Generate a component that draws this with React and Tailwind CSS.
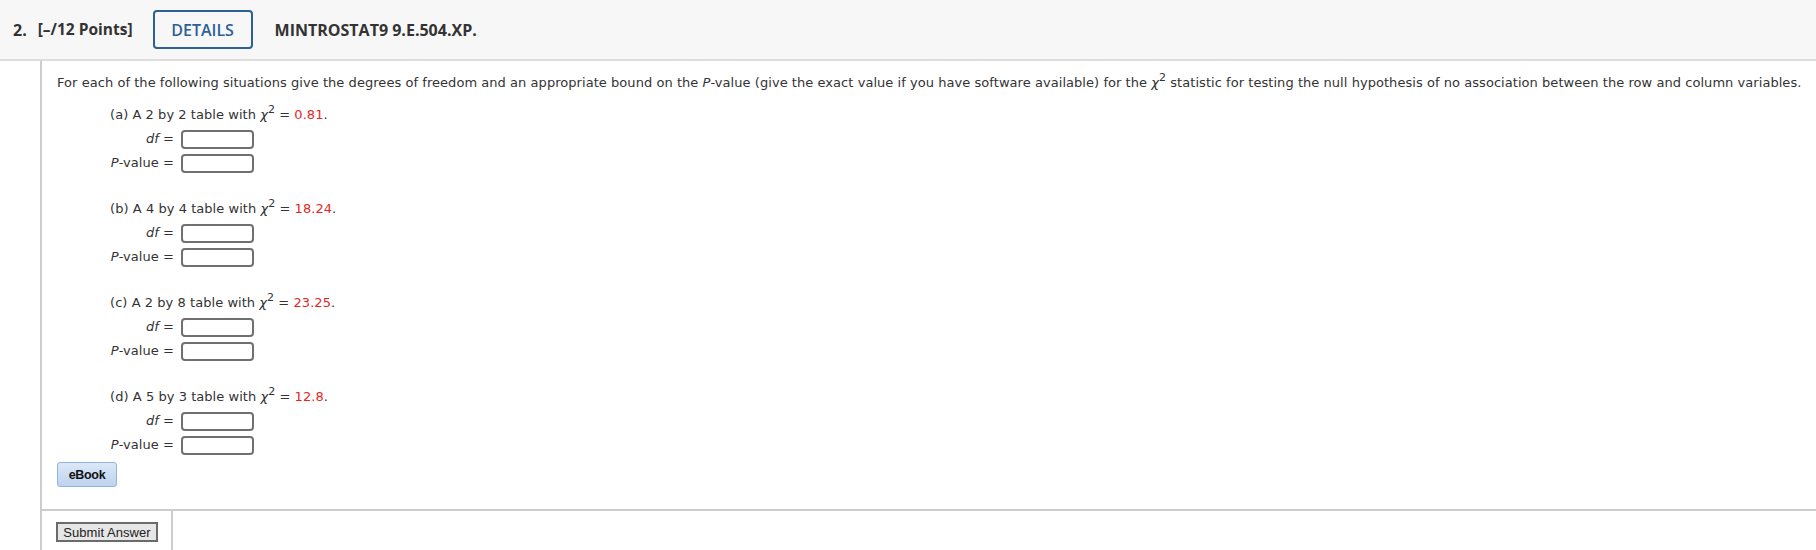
import React from "react";

const parts = [
  { key: "a", rows: 2, cols: 2, chi: "0.81" },
  { key: "b", rows: 4, cols: 4, chi: "18.24" },
  { key: "c", rows: 2, cols: 8, chi: "23.25" },
  { key: "d", rows: 5, cols: 3, chi: "12.8" },
];

// chi-squared symbol with superscript 2
const Chi = () => (
  <span className="whitespace-nowrap">
    <i>χ</i>
    <sup className="text-[11px] -top-[0.55em]">2</sup>
  </span>
);

const AnswerRow = ({ label }) => (
  <div className="flex items-center h-[24px]">
    <div className="w-[64px] text-right">{label} =</div>
    <div className="ml-[7px] w-[73px] h-[19px] border-2 border-[#707070] rounded-[4px] bg-white"></div>
  </div>
);

export default function App() {
  return (
    <div className="w-full min-h-[550px] bg-white text-[#333333]">
      {/* question header */}
      <div className="h-[61px] bg-[#f7f7f7] border-b-2 border-[#dddddd] flex items-center font-['Open_Sans',sans-serif] font-semibold text-[#333333]">
        <span className="ml-[13px] text-[16px] font-bold">2.</span>
        <span className="ml-[11px] text-[15.5px] font-bold">[–/12 Points]</span>
        <div className="ml-[20px] w-[100px] h-[39px] border-2 border-[#2c6196] rounded-[4px] flex items-center justify-center text-[#2c6196] text-[16px]">
          DETAILS
        </div>
        <span className="ml-[22px] text-[16px] font-bold">MINTROSTAT9 9.E.504.XP.</span>
      </div>

      {/* question body */}
      <div className="ml-[40px] border-l-2 border-[#cccccc] font-['DejaVu_Sans',Verdana,sans-serif] text-[13px] leading-[16px] tracking-[0.05px]">
        <div className="pl-[15px] pt-[14px] pb-[22px]">
          <p className="whitespace-nowrap">
            For each of the following situations give the degrees of freedom and an appropriate bound on the{" "}
            <i>P</i>-value (give the exact value if you have software available) for the <Chi /> statistic for
            testing the null hypothesis of no association between the row and column variables.
          </p>

          <div className="mt-[12px] ml-[53px] flex flex-col gap-[22px]">
            {parts.map((p) => (
              <div key={p.key}>
                <div className="h-[24px] flex items-center">
                  <span>
                    ({p.key}) A {p.rows} by {p.cols} table with <Chi /> ={" "}
                    <span className="text-[#e2281d]">{p.chi}</span>.
                  </span>
                </div>
                <AnswerRow label={<i>df</i>} />
                <AnswerRow
                  label={
                    <>
                      <i>P</i>-value
                    </>
                  }
                />
              </div>
            ))}
          </div>

          <button className="mt-[5px] w-[60px] h-[25px] rounded-[3px] border border-[#93b3dd] bg-gradient-to-b from-[#dbe8f8] to-[#bdd3f0] font-['Liberation_Sans',Arial,sans-serif] font-bold text-[12.5px] text-[#111111] tracking-[-0.3px]">
            eBook
          </button>
        </div>

        {/* submit row */}
        <div className="border-t-2 border-[#cccccc] flex">
          <div className="w-[131px] h-[40px] border-r-2 border-[#cccccc] pl-[14px] pt-[11px]">
            <button className="w-[102px] h-[20px] border-2 border-[#6b6b6b] bg-[#e6e6e6] font-['Liberation_Sans',Arial,sans-serif] text-[13px] leading-none text-[#222222]">
              Submit Answer
            </button>
          </div>
        </div>
      </div>
    </div>
  );
}
